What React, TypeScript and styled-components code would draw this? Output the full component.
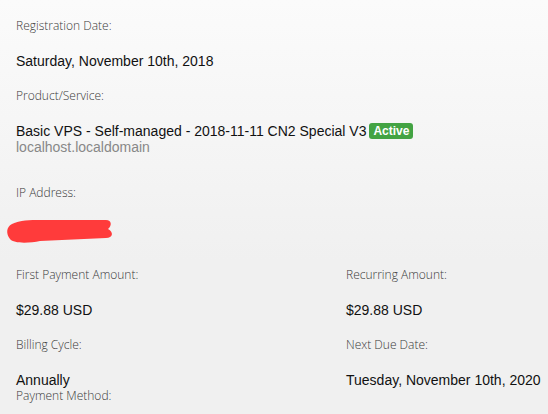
import React from 'react';
import styled, { createGlobalStyle } from 'styled-components';

const GlobalStyle = createGlobalStyle`
  html, body {
    margin: 0;
    padding: 0;
  }
  body {
    background: linear-gradient(to bottom, #fbfbfb 0px, #f0f0f0 260px, #f0f0f0 100%);
    min-height: 414px;
    font-family: "Liberation Sans", Arial, sans-serif;
    color: #111;
  }
`;

const Page = styled.div`
  padding: 16px 0 0 16px;
  width: 548px;
  height: 414px;
  box-sizing: border-box;
  overflow: hidden;
`;

const Label = styled.div<{ $pull?: number }>`
  font-family: "Open Sans", sans-serif;
  font-weight: 300;
  font-size: 12px;
  line-height: 20px;
  color: #3a3a3a;
  margin-top: ${(p) => (p.$pull ? -p.$pull : 0)}px;
  margin-bottom: 15px;
  white-space: nowrap;
`;

const Value = styled.div<{ $gap?: number }>`
  font-size: 14px;
  line-height: 20px;
  color: #111;
  margin-bottom: ${(p) => (p.$gap ?? 15)}px;
  white-space: nowrap;
`;

const SubLine = styled.div`
  font-size: 14px;
  line-height: 16px;
  margin-top: -2px;
  color: #888;
`;

const Badge = styled.span`
  display: inline-block;
  background: #43a343;
  color: #fff;
  font-weight: bold;
  font-size: 12px;
  line-height: 16px;
  padding: 0 4px;
  border-radius: 3px;
  margin-left: 3px;
  vertical-align: 1px;
`;

const Product = styled.div`
  margin-bottom: 28px;
`;

const Redacted = styled.svg`
  display: block;
  margin: 16px 0 20px -16px;
`;

const Columns = styled.div`
  display: grid;
  grid-template-columns: 330px 1fr;
`;

const Column = styled.div`
  display: flex;
  flex-direction: column;
`;

export default function App() {
  return (
    <>
      <GlobalStyle />
      <Page>
        <Label>Registration Date:</Label>
        <Value>Saturday, November 10th, 2018</Value>
        <Label>Product/Service:</Label>
        <Product>
          <Value $gap={0}>
            Basic VPS - Self-managed - 2018-11-11 CN2 Special V3<Badge>Active</Badge>
          </Value>
          <SubLine>localhost.localdomain</SubLine>
        </Product>
        <Label>IP Address:</Label>
        <Redacted width="120" height="26" viewBox="0 218 120 26">
          <path
            d="M12 223 C20 219 30 219 40 219 L106 219 C112 219 112 225 108 228 C114 231 113 237 106 237 L40 240 C30 242 14 243 10 238 C6 233 6 226 12 223 Z"
            fill="#ff3b3b"
          />
        </Redacted>
        <Columns>
          <Column>
            <Label>First Payment Amount:</Label>
            <Value>$29.88 USD</Value>
            <Label>Billing Cycle:</Label>
            <Value $gap={0}>Annually</Value>
            <Label $pull={4}>Payment Method:</Label>
          </Column>
          <Column>
            <Label>Recurring Amount:</Label>
            <Value>$29.88 USD</Value>
            <Label>Next Due Date:</Label>
            <Value>Tuesday, November 10th, 2020</Value>
          </Column>
        </Columns>
      </Page>
    </>
  );
}
